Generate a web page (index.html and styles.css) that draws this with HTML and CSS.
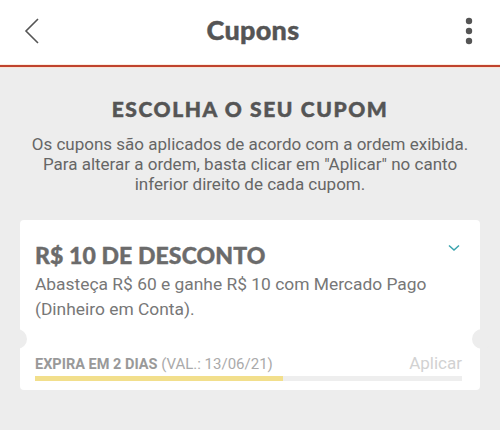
FILE: index.html
```html
<!DOCTYPE html>
<html lang="pt-BR">
<head>
  <meta charset="UTF-8">
  <title>Cupons</title>
  <link rel="stylesheet" href="styles.css">
</head>
<body>
  <div class="header">
    <button class="back" title="Voltar">
      <svg width="16" height="26" viewBox="0 0 16 26"><path d="M14 1 L2 13 L14 25" fill="none" stroke="#555" stroke-width="1.6"/></svg>
    </button>
    <div class="title">Cupons</div>
    <button class="more" title="Mais">
      <svg width="8" height="28" viewBox="0 0 8 28"><circle cx="4" cy="4" r="3.2" fill="#555"/><circle cx="4" cy="14" r="3.2" fill="#555"/><circle cx="4" cy="24" r="3.2" fill="#555"/></svg>
    </button>
  </div>
  <div class="main">
    <div class="section-title">ESCOLHA O SEU CUPOM</div>
    <p class="intro">Os cupons são aplicados de acordo com a ordem exibida.<br>Para alterar a ordem, basta clicar em "Aplicar" no canto<br>inferior direito de cada cupom.</p>
    <div class="coupon">
      <div class="coupon-top">
        <div class="coupon-text">
          <div class="coupon-title">R$ 10 DE DESCONTO</div>
          <div class="coupon-desc">Abasteça R$ 60 e ganhe R$ 10 com Mercado Pago (Dinheiro em Conta).</div>
        </div>
        <svg class="chevron" width="12" height="8" viewBox="0 0 12 8"><path d="M1 1.5 L6 6 L11 1.5" fill="none" stroke="#3aa3ad" stroke-width="1.5"/></svg>
      </div>
      <div class="coupon-bottom">
        <div class="expire-row">
          <div class="expire"><b>EXPIRA EM 2 DIAS</b> (VAL.: 13/06/21)</div>
          <div class="apply">Aplicar</div>
        </div>
        <div class="progress"><div class="progress-fill" style="width: 58%"></div></div>
      </div>
    </div>
  </div>
</body>
</html>
```
FILE: styles.css
```css
body {
  margin: 0;
  font-family: Roboto, "Noto Sans", Arial, sans-serif;
  background: #ededed;
  color: #666;
}
button {
  background: none;
  border: none;
  padding: 0;
  cursor: pointer;
  display: flex;
  align-items: center;
  justify-content: center;
}
.header {
  background: #fff;
  height: 65px;
  display: flex;
  align-items: center;
  justify-content: space-between;
  padding: 0 26px 0 22px;
  border-bottom: 2px solid #c0432e;
  box-shadow: 0 1px 0 #f8e4d6, 0 -1px 0 #fbeee2 inset;
}
.header .back {
  width: 20px;
  height: 30px;
  margin-top: -4px;
}
.header .more {
  width: 10px;
  height: 30px;
  margin-top: -4px;
}
.header .title {
  font-family: Lato, sans-serif;
  font-weight: 900;
  font-size: 27px;
  letter-spacing: 0.3px;
  color: #555;
  margin-top: -6px;
  -webkit-text-stroke: 0.4px #555;
}
.main {
  padding: 29px 20px 0;
}
.section-title {
  font-family: Lato, sans-serif;
  font-weight: 900;
  font-size: 21px;
  letter-spacing: 1.6px;
  color: #555;
  text-align: center;
  -webkit-text-stroke: 0.5px #555;
}
.intro {
  margin: 13px 0 0;
  font-size: 17px;
  line-height: 20px;
  color: #666;
  text-align: center;
}
.coupon {
  margin-top: 26px;
  background: #fff;
  border-radius: 4px;
  position: relative;
}
.coupon::before, .coupon::after {
  content: '';
  position: absolute;
  top: 109px;
  width: 20px;
  height: 20px;
  border-radius: 50%;
  background: #ededed;
}
.coupon::before {
  left: -13px;
}
.coupon::after {
  right: -12px;
}
.coupon-top {
  display: flex;
  justify-content: space-between;
  padding: 22px 20px 0 15px;
  height: 110px;
  box-sizing: border-box;
}
.coupon-title {
  font-family: Lato, sans-serif;
  font-weight: 900;
  font-size: 23px;
  letter-spacing: 0.1px;
  color: #6b6b6b;
  line-height: 26px;
  -webkit-text-stroke: 0.4px #6b6b6b;
}
.coupon-desc {
  margin-top: 4px;
  font-size: 17.4px;
  line-height: 25px;
  color: #777;
}
.chevron {
  margin-top: 2px;
  flex-shrink: 0;
}
.coupon-bottom {
  padding: 23px 18px 9px 15px;
}
.expire-row {
  display: flex;
  justify-content: space-between;
  align-items: flex-end;
}
.expire {
  font-size: 15px;
  color: #aaa;
}
.expire b {
  color: #999;
  font-weight: 700;
  font-size: 14.5px;
}
.apply {
  font-size: 17px;
  color: #d2d2d2;
}
.progress {
  margin-top: 3px;
  height: 5px;
  background: #eee;
}
.progress-fill {
  height: 100%;
  background: #f2df8c;
}
```
